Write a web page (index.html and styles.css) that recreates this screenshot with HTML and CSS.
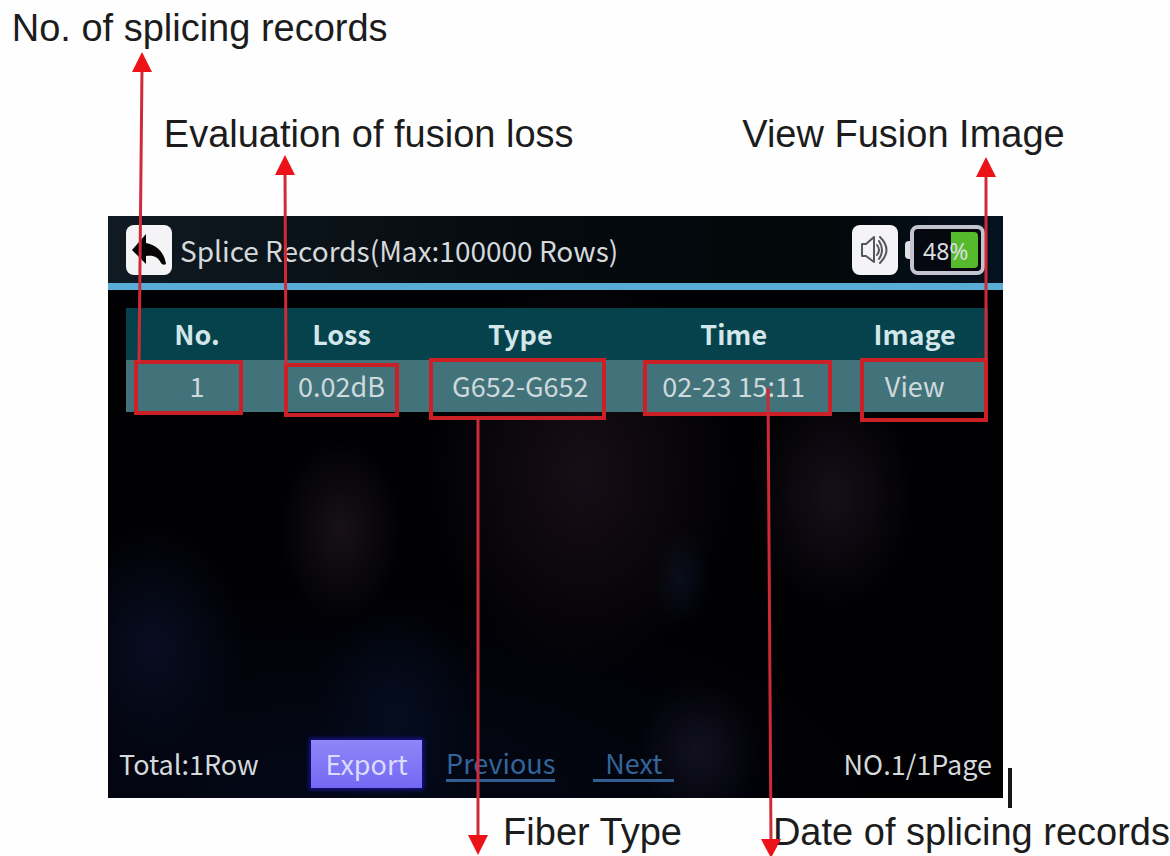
FILE: index.html
```html
<!DOCTYPE html>
<html lang="en">
<head>
<meta charset="utf-8">
<title>Splice Records</title>
<link rel="stylesheet" href="styles.css">
</head>
<body>
<main class="figure">
  <div class="caption caption-first"><span>No. of splicing records</span></div>
  <div class="caption caption-second"><span>Evaluation of fusion loss</span><span>View Fusion Image</span></div>

  <section class="device">
    <header class="bar">
      <button class="tile" aria-label="Back">
        <svg viewBox="0 0 46 50" width="46" height="50"><path d="M6 25 L20 9 V18 C31 20 38 27 40 39 Q37 41 35 38 C32 32 28 30 20 31 V39 Z" fill="#080406"/></svg>
      </button>
      <h1 class="title">Splice Records(Max:100000 Rows)</h1>
      <button class="tile" aria-label="Sound">
        <svg viewBox="0 0 46 50" width="46" height="50" fill="none" stroke="#55585a" stroke-width="2" stroke-linejoin="round"><path d="M10 19 H14 L22 12 V37 L14 31 H10 Z"/><path d="M25 20 Q29 25 25 30 M27 16 Q33 25 27 34 M28 12 Q41 25 28 38" stroke-linecap="round"/></svg>
      </button>
      <div class="battery"><span class="cell"><span class="level">48%</span></span></div>
    </header>

    <table class="records">
      <colgroup><col class="col-no"><col class="col-loss"><col class="col-type"><col class="col-time"><col class="col-image"></colgroup>
      <thead><tr><th scope="col">No.</th><th scope="col">Loss</th><th scope="col">Type</th><th scope="col">Time</th><th scope="col">Image</th></tr></thead>
      <tbody><tr><td>1</td><td>0.02dB</td><td>G652-G652</td><td>02-23 15:11</td><td><a class="view" href="#view">View</a></td></tr></tbody>
    </table>

    <footer class="footer">
      <span class="total">Total:1Row</span>
      <button class="export">Export</button>
      <nav class="pager"><a href="#previous">Previous</a><a class="next" href="#next">Next</a></nav>
      <span>NO.1/1Page</span>
    </footer>
  </section>

  <div class="caption caption-last"><span>Fiber Type</span><span>Date of splicing records</span></div>

  <svg class="marks" viewBox="0 0 1170 856" preserveAspectRatio="none" aria-hidden="true">
    <g class="boxes">
      <rect x="136" y="362" width="105" height="51"/>
      <rect x="286" y="365" width="111" height="50"/>
      <rect x="431" y="360" width="173" height="58"/>
      <rect x="645" y="362" width="185" height="52"/>
      <rect x="862" y="360" width="124" height="60"/>
    </g>
    <g class="leads">
      <path d="M142 68 L139 362"/>
      <path d="M285 172 L286 365"/>
      <path d="M986 172 V360"/>
      <path d="M478 418 V838"/>
      <path d="M768 388 L771 842"/>
    </g>
    <g class="heads">
      <path d="M142 52 L152 72 H132 Z"/>
      <path d="M285 155 L295 175 H275 Z"/>
      <path d="M986 157 L996 177 H976 Z"/>
      <path d="M478 855 L488 835 H468 Z"/>
      <path d="M771 858 L781 839 H761 Z"/>
    </g>
    <path class="cursor" d="M1010 768 V808"/>
  </svg>
</main>
</body>
</html>
```
FILE: styles.css
```css
* { box-sizing: border-box; }

body {
  margin: 0;
  background: #fefefe;
  font-family: "Noto Sans CJK SC", "Noto Sans", sans-serif;
}

.figure {
  position: relative;
  display: grid;
  grid-template-columns: 108fr 895fr 167fr;
  padding-bottom: 3px;
  overflow: hidden;
}

.caption {
  grid-column: 1 / -1;
  display: flex;
  justify-content: space-between;
  color: #1c1c1c;
  font: 38px/42px "Liberation Sans", Arial, sans-serif;
  white-space: nowrap;
}

.caption-first { padding: 7px 0 0 1%; }
.caption-second { padding: 64px 9% 61px 14%; }
.caption-last { padding: 13px 0 0 43%; }

.device {
  grid-column: 2;
  display: flex;
  flex-direction: column;
  min-height: 582px;
  color: #d5d9db;
  font-size: 27px;
  line-height: 40px;
  background:
    radial-gradient(ellipse 60px 90px at 26% 54%, #171116, transparent),
    radial-gradient(ellipse 150px 200px at 53% 44%, #170e16, transparent),
    radial-gradient(ellipse 80px 110px at 81% 48%, #150f19, transparent),
    radial-gradient(ellipse 30px 50px at 64% 62%, #060d1b, transparent),
    radial-gradient(ellipse 90px 120px at 5% 74%, #080d22, transparent),
    radial-gradient(ellipse 80px 110px at 32% 86%, #050d20, transparent),
    radial-gradient(ellipse 60px 70px at 66% 92%, #121020, transparent),
    radial-gradient(ellipse 60% 35% at 25% 100%, #040818, transparent),
    #010104;
}

.bar {
  display: flex;
  align-items: center;
  height: 74px;
  padding: 0 18px;
  border-bottom: 7px solid #58acd5;
  background: linear-gradient(90deg, #101a22, #040a0e 50%, #020709 80%, #061222);
}

.title {
  flex: 1;
  margin: 0 0 0 8px;
  font-size: 28px;
  font-weight: 400;
  white-space: nowrap;
}

.tile {
  width: 46px;
  height: 50px;
  padding: 0;
  border: 0;
  border-radius: 8px;
  background: #f4f3f5;
}

.tile svg { display: block; }

.battery {
  display: flex;
  align-items: center;
  margin-left: 7px;
}

.battery::before {
  content: "";
  width: 5px;
  height: 18px;
  border-radius: 4px 0 0 4px;
  background: #dfe1e6;
}

.cell {
  width: 75px;
  height: 50px;
  padding: 3px;
  border: 4px solid #c3c4d0;
  border-radius: 8px;
  background: #07080f;
}

.level {
  display: block;
  height: 36px;
  padding-left: 6px;
  border-radius: 4px;
  background: linear-gradient(90deg, transparent 56%, #55bb2d 56%);
  color: #dcdee0;
  font: 23px/38px "Noto Sans", sans-serif;
}

.records {
  margin: 18px 15px 0 18px;
  border-collapse: collapse;
  table-layout: fixed;
}

.col-no { width: 16.5%; }
.col-loss, .col-image { width: 17%; }
.col-type { width: 24.5%; }
.col-time { width: 25%; }

th, td {
  height: 52px;
  padding: 0;
  text-align: center;
}

th { background: #05424b; color: #d3e6ea; font-weight: 700; }
td { background: #42737a; color: #ced9dc; }
.view { color: inherit; text-decoration: none; }

.footer {
  display: flex;
  align-items: center;
  margin-top: auto;
  padding: 0 11px 10px;
}

.total { width: 22%; }

.export {
  width: 111px;
  height: 48px;
  padding: 0;
  border: 0;
  background: linear-gradient(#8f86f7, #7468f3);
  box-shadow: 0 0 4px 2px #17138a;
  color: #dcdcff;
  font: inherit;
}

.pager {
  flex: 1;
  display: flex;
  gap: 38px;
  margin-left: 24px;
}

.pager a {
  border-bottom: 3px solid #315f91;
  color: #33659b;
  line-height: 32px;
  text-decoration: none;
}

.pager .next { padding: 0 12px; }

.marks {
  position: absolute;
  inset: 0;
  width: 100%;
  height: 100%;
  pointer-events: none;
}

.boxes { fill: none; stroke: #cb2026; stroke-width: 4; }
.leads { fill: none; stroke: #d02a38; stroke-width: 3; }
.heads { fill: #ed1218; }
.cursor { stroke: #161616; stroke-width: 4; }
```
